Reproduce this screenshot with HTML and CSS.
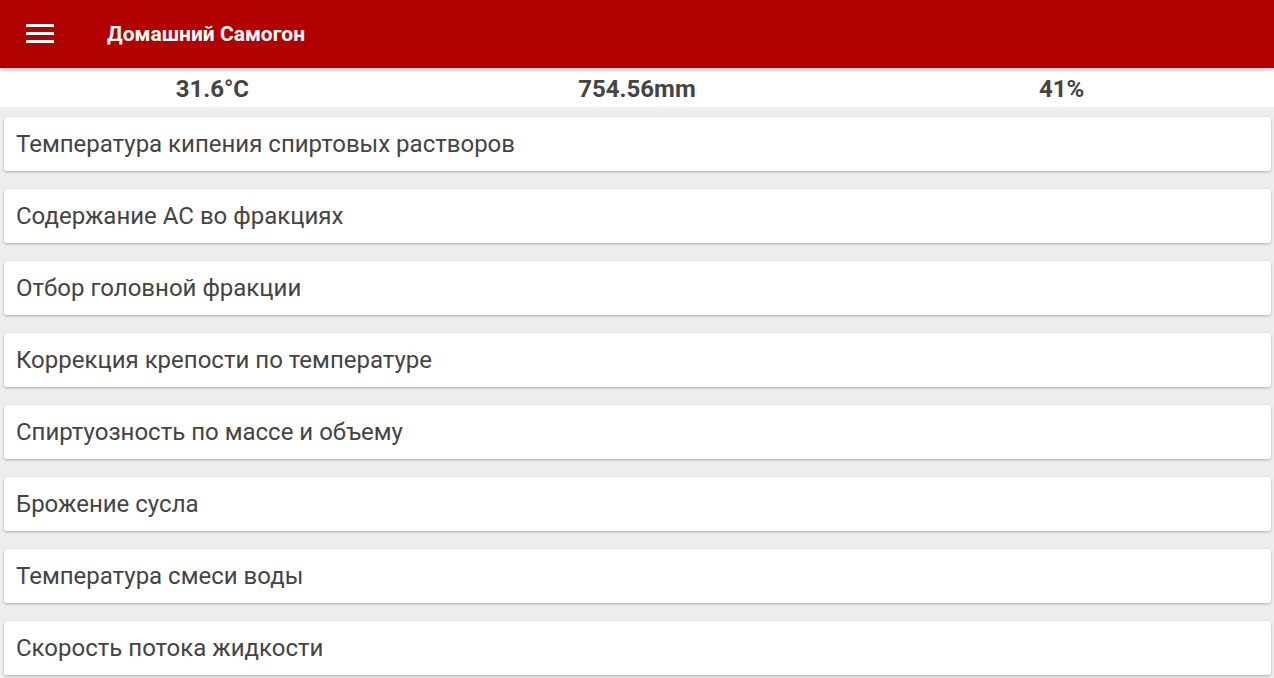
FILE: index.html
```html
<!DOCTYPE html>
<html lang="ru">
<head>
<meta charset="utf-8">
<title>Домашний Самогон</title>
<link rel="stylesheet" href="styles.css">
</head>
<body>
<header class="appbar">
  <button class="menu-btn" aria-label="Меню">
    <svg width="28" height="20" viewBox="0 0 28 20"><rect x="0" y="0" width="28" height="3" fill="#fff"/><rect x="0" y="8" width="28" height="3" fill="#fff"/><rect x="0" y="16" width="28" height="3" fill="#fff"/></svg>
  </button>
  <h1 class="title">Домашний Самогон</h1>
</header>
<div class="stats">
  <div class="stat">31.6°C</div>
  <div class="stat">754.56mm</div>
  <div class="stat">41%</div>
</div>
<main class="list">
  <div class="card">Температура кипения спиртовых растворов</div>
  <div class="card">Содержание АС во фракциях</div>
  <div class="card">Отбор головной фракции</div>
  <div class="card">Коррекция крепости по температуре</div>
  <div class="card">Спиртуозность по массе и объему</div>
  <div class="card">Брожение сусла</div>
  <div class="card">Температура смеси воды</div>
  <div class="card">Скорость потока жидкости</div>
</main>
</body>
</html>
```
FILE: styles.css
```css
* { box-sizing: border-box; }
html, body { margin: 0; padding: 0; }
body {
  background: #eeeeee;
  font-family: Roboto, "Noto Sans", sans-serif;
  overflow: hidden;
  height: 678px;
}
.appbar {
  height: 68px;
  background: #b00000;
  display: flex;
  align-items: center;
  position: relative;
  z-index: 2;
  box-shadow: 0 2px 4px rgba(0,0,0,0.25);
}
.menu-btn {
  background: none;
  border: 0;
  padding: 0;
  margin-left: 26px;
  width: 28px;
  height: 20px;
  display: flex;
  margin-top: -1px;
}
.title {
  margin: 0 0 0 53px;
  color: #fff;
  font-size: 21px;
  font-weight: 700;
}
.stats {
  height: 39px;
  background: #fff;
  display: grid;
  grid-template-columns: 1fr 1fr 1fr;
  align-items: center;
  padding-top: 3px;
}
.stat {
  text-align: center;
  font-weight: 700;
  font-size: 24px;
  color: #444;
}
.list {
  padding: 10px 3px 0 4px;
  display: flex;
  flex-direction: column;
  gap: 18px;
}
.card {
  height: 54px;
  background: #fff;
  border-radius: 3px;
  box-shadow: 0 1px 3px rgba(0,0,0,0.28);
  display: flex;
  align-items: center;
  padding-left: 12px;
  font-size: 24px;
  color: #444;
}
```
